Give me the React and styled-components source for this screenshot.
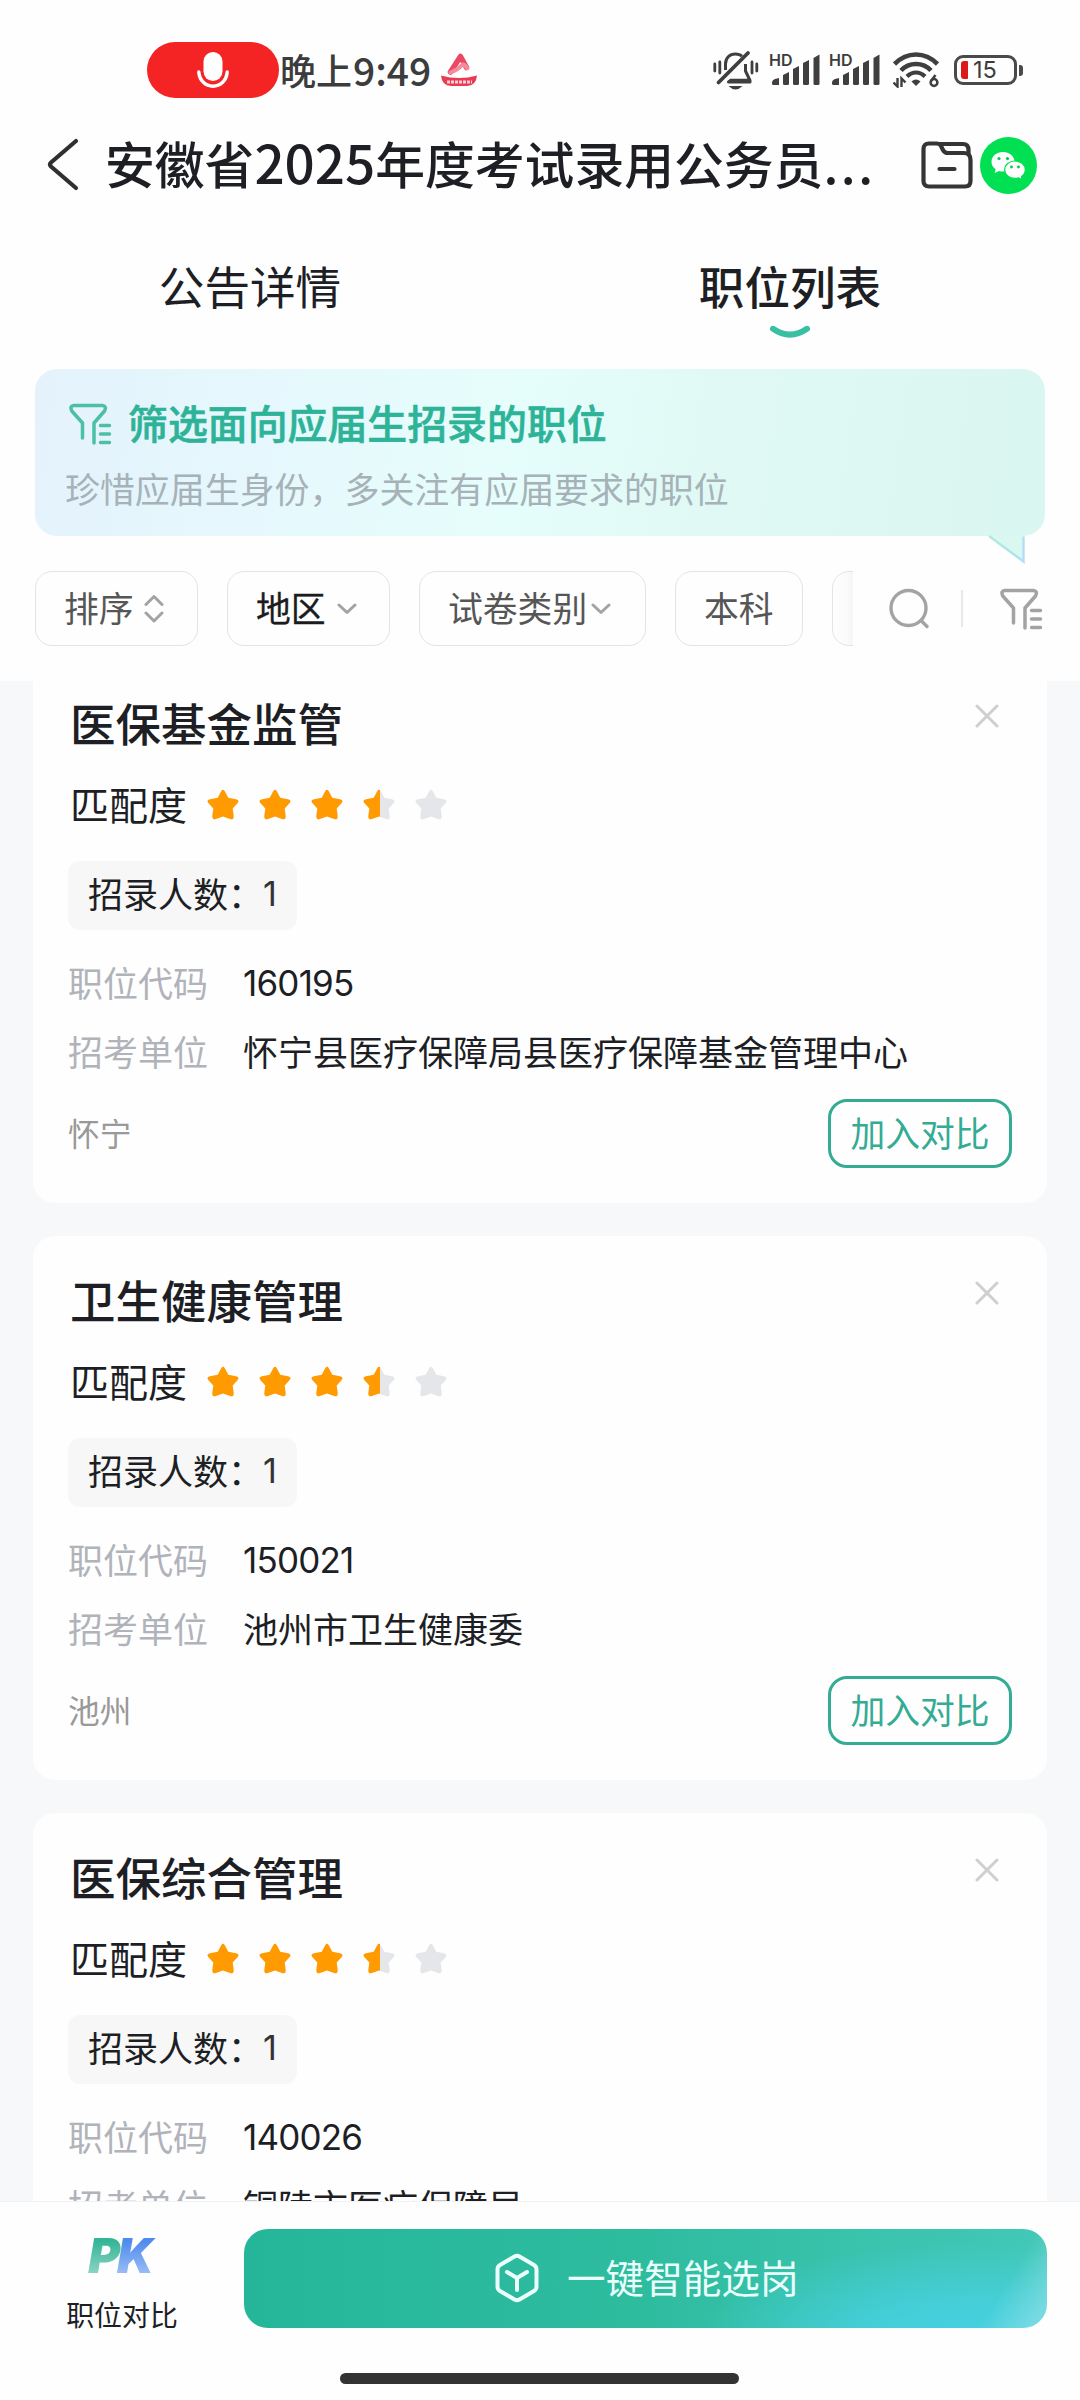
import React from "react";
import styled, { createGlobalStyle } from "styled-components";

const GlobalStyle = createGlobalStyle`
  * { box-sizing: border-box; }
  html, body { margin: 0; padding: 0; background: #fff; }
  body { font-family: Lato, "Noto Sans CJK SC", sans-serif; }
  svg { display: block; flex: none; }
`;

const Screen = styled.div`
  width: 1080px;
  height: 2400px;
  display: flex;
  flex-direction: column;
  overflow: hidden;
  background: #fefefe;
  color: #1d1f25;
  white-space: nowrap;
`;

const Header = styled.header`
  height: 681px;
  flex: none;
  display: flex;
  flex-direction: column;
`;

/* status bar */
const StatusBar = styled.div`
  height: 120px;
  padding: 20px 57px 0 147px;
  display: flex;
  align-items: center;
  color: #3c3c3c;
`;
const MicPill = styled.div`
  width: 132px;
  height: 56px;
  border-radius: 28px;
  background: #f52424;
  display: flex;
  align-items: center;
  justify-content: center;
`;
const Clock = styled.div`
  display: flex;
  margin: 0 6px 2px 1px;
  font-family: "Noto Sans CJK SC", sans-serif;
  font-size: 36px;
  font-weight: 500;
  line-height: 44px;
`;
const ClockDigits = styled.span`
  width: 83px;
  padding-left: 1px;
  font-size: 39px;
`;
const StatusIcons = styled.div`
  margin-left: auto;
  display: flex;
  align-items: center;
`;
const Signal = styled.div`
  position: relative;
  width: 50px;
  height: 32px;
  margin-left: ${(p) => p.$gap}px;
`;
const SignalTag = styled.span`
  position: absolute;
  left: -1px;
  top: 0;
  font-family: Inter, sans-serif;
  font-size: 16px;
  line-height: 12px;
  font-weight: 600;
`;
const WifiBox = styled.div`
  margin-left: 13px;
`;
const Battery = styled.div`
  width: 63px;
  height: 30px;
  margin-left: 15px;
  border: 3px solid #4a4a4a;
  border-radius: 9px;
  padding: 3px 3px 3px 4px;
  display: flex;
  align-items: center;
  font-family: Inter, sans-serif;
  font-size: 23.5px;
  line-height: 20px;
`;
const BatteryLevel = styled.div`
  width: 7px;
  height: 18px;
  margin-right: 5px;
  border-radius: 3px 1px 1px 3px;
  background: #dc1a1a;
`;
const BatteryTip = styled.div`
  width: 4px;
  height: 11px;
  margin-left: 2px;
  border-radius: 0 3px 3px 0;
  background: #4a4a4a;
`;

/* title bar */
const TitleBar = styled.div`
  height: 90px;
  padding: 0 43px 0 46px;
  display: flex;
  align-items: center;
`;
const PageTitle = styled.h1`
  margin: 0 0 3px 25px;
  flex: 1;
  font-size: 49.8px;
  font-weight: 500;
  line-height: 60px;
`;
const TitleDigits = styled.span`
  font-family: "Noto Sans CJK SC", sans-serif;
  font-size: 53px;
  line-height: 1px;
`;
const TitleDots = styled.span`
  font-family: "Noto Sans CJK SC", sans-serif;
  letter-spacing: 2.6px;
`;
const TitleActions = styled.div`
  display: flex;
  align-items: center;
  gap: 7px;
`;

/* tabs */
const Tabs = styled.nav`
  height: 159px;
  padding-top: 48px;
  display: grid;
  grid-template-columns: 500px 580px;
`;
const Tab = styled.div`
  display: flex;
  flex-direction: column;
  align-items: center;
  gap: 7px;
  font-size: 45.6px;
  line-height: 60px;
  font-weight: ${(p) => (p.$active ? 500 : 400)};
`;

/* banner */
const Banner = styled.section`
  position: relative;
  height: 167px;
  margin: 0 35px;
  padding: 29px 30px 0;
  border-radius: 22px;
  background: linear-gradient(98deg, #e4f2fc 0%, #e6f9fd 28%, #e6fefb 48%, #e0f9f5 66%, #daf6f0 100%);
`;
const BannerTitle = styled.div`
  display: flex;
  align-items: center;
  gap: 15px;
  padding-left: 4px;
  color: #2db398;
  font-size: 39.9px;
  font-weight: 500;
  -webkit-text-stroke: 0.6px #2db398;
  line-height: 52px;
`;
const BannerNote = styled.div`
  margin-top: 15px;
  color: #a6b2b8;
  font-size: 34.95px;
  line-height: 50px;
`;
const BannerTail = styled.div`
  position: absolute;
  left: 950px;
  top: 166px;
`;

/* filter row */
const FilterRow = styled.div`
  height: 75px;
  margin: 35px 0 0 35px;
  display: flex;
  align-items: center;
`;
const Chips = styled.div`
  width: 818px;
  height: 75px;
  display: flex;
  gap: 29px;
  overflow: hidden;
`;
const Chip = styled.div`
  flex: none;
  width: ${(p) => p.$width}px;
  height: 75px;
  padding-left: 28px;
  border: 1px solid #e4e4e4;
  border-radius: 17px;
  display: flex;
  align-items: center;
  gap: ${(p) => p.$gap || 0}px;
  color: ${(p) => (p.$strong ? "#1c1c1e" : "#565656")};
  font-size: 34.8px;
  -webkit-text-stroke: ${(p) => (p.$strong ? 0.3 : 0)}px #1c1c1e;
  line-height: 50px;
  background: ${(p) => (p.$faded ? "linear-gradient(90deg, #fefefe 0, #fbfbfb 12px, #f6f6f6 20px)" : "transparent")};
`;
const FilterTools = styled.div`
  display: flex;
  align-items: center;
  margin-left: 36px;
`;
const ToolDivider = styled.div`
  width: 2px;
  height: 37px;
  margin: 0 37px 0 31px;
  background: #e8e8e8;
`;

/* list */
const List = styled.main`
  flex: 1;
  min-height: 0;
  overflow: hidden;
  padding: 0 33px;
  background: #f6f8fa;
`;
const Cards = styled.div`
  margin-top: -22px;
  display: flex;
  flex-direction: column;
  gap: 33px;
`;
const Card = styled.article`
  height: 544px;
  flex: none;
  padding: 36px 35px 35px 35px;
  border-radius: 22px;
  background: #fefefe;
`;
const CardHead = styled.div`
  display: flex;
  justify-content: space-between;
  padding: 0 13px 0 2px;
`;
const JobTitle = styled.h2`
  margin: 0;
  font-size: 45.5px;
  font-weight: 500;
  line-height: 60px;
`;
const CloseSlot = styled.div`
  padding-top: 9px;
`;
const Rating = styled.div`
  height: 60px;
  margin-top: 20px;
  padding-left: 2px;
  display: flex;
  align-items: center;
  font-size: 39px;
  line-height: 60px;
`;
const Stars = styled.div`
  display: flex;
  gap: 20px;
  margin-left: 20px;
`;
const Quota = styled.div`
  width: 229px;
  height: 69px;
  margin: 26px 0 23px;
  padding: 0 0 4px 20px;
  border-radius: 12px;
  background: #f7f7f7;
  display: flex;
  align-items: center;
  font-size: 35px;
  line-height: 50px;
`;
const QuotaValue = styled.span`
  color: #333;
  font-family: Inter, sans-serif;
  font-size: 34px;
`;
const Field = styled.div`
  display: flex;
  gap: 35px;
  margin-bottom: ${(p) => p.$after}px;
  font-size: 35px;
  line-height: 60px;
`;
const FieldLabel = styled.span`
  color: #b1b3ba;
`;
const FieldCode = styled.span`
  font-family: Inter, sans-serif;
  font-size: 35px;
  letter-spacing: -0.8px;
`;
const CardFoot = styled.div`
  display: flex;
  align-items: center;
  justify-content: space-between;
`;
const Place = styled.span`
  padding-bottom: 3px;
  color: #999;
  font-size: 31.7px;
`;
const CompareButton = styled.button`
  width: 184px;
  height: 69px;
  padding: 0;
  border: 3px solid #34ab93;
  border-radius: 19px;
  background: transparent;
  color: #34ab93;
  font: inherit;
  font-size: 34.8px;
  line-height: 50px;
`;

/* bottom bar */
const BottomBar = styled.footer`
  height: 199px;
  flex: none;
  padding: 27px 33px 0 62px;
  border-top: 1px solid #f0f1f2;
  display: flex;
  flex-direction: column;
  align-items: stretch;
`;
const BottomRow = styled.div`
  display: flex;
  justify-content: space-between;
`;
const PkEntry = styled.div`
  width: 120px;
  height: 99px;
  display: flex;
  flex-direction: column;
  align-items: center;
`;
const PkMark = styled.div`
  padding: 0 7px 0 2px;
  margin-top: -3px;
  font-family: Inter, sans-serif;
  font-size: 48.5px;
  font-style: italic;
  font-weight: 900;
  line-height: 60px;
  letter-spacing: -3px;
  color: transparent;
  background:
    linear-gradient(rgba(255, 255, 255, 0) 25%, rgba(255, 255, 255, 0.42) 78%),
    linear-gradient(100deg, #35b597 48%, #4f8bee 48%);
  -webkit-background-clip: text;
  background-clip: text;
`;
const PkLabel = styled.div`
  margin-top: 9px;
  font-size: 27.9px;
  line-height: 40px;
`;
const SmartButton = styled.button`
  width: 803px;
  height: 99px;
  border: 0;
  border-radius: 24px;
  padding: 0 0 2px 251px;
  display: flex;
  align-items: center;
  gap: 28px;
  color: #eafffb;
  font: inherit;
  font-size: 38.6px;
  line-height: 54px;
  background:
    linear-gradient(122deg, transparent 92%, rgba(150, 225, 232, 0.6) 98%),
    radial-gradient(ellipse 260px 95px at 715px 108px, #46d1e2 0%, rgba(70, 209, 226, 0.75) 40%, rgba(70, 209, 226, 0) 100%),
    linear-gradient(90deg, #25b699 0%, #2ebc9f 50%, #43c8b8 100%);
`;
const HomeIndicator = styled.div`
  width: 399px;
  height: 11px;
  margin: 45px 0 0 278px;
  border-radius: 6px;
  background: #333;
`;

const MicIcon = () => (
  <svg width="32" height="36" viewBox="0 0 32 36" fill="none">
    <rect x="6.5" y="0" width="19" height="29" rx="9.5" fill="#fff" />
    <path d="M1.8 20C2.5 28.6 8.5 34.2 16 34.2S29.500 28.600 30.200 20" stroke="#fff" strokeWidth="3.4" strokeLinecap="round" />
  </svg>
);

const BoatIcon = () => (
  <svg width="36" height="36" viewBox="0 0 36 36">
    <path d="M9.500 20L19.500 4.500L25.500 15.500" fill="none" stroke="#ec4763" strokeWidth="5.500" strokeLinecap="round" strokeLinejoin="round" />
    <path d="M9.500 20.500Q17 17.500 20 14T26 16" fill="none" stroke="#f48c9c" strokeWidth="4" strokeLinecap="round" strokeLinejoin="round" />
    <path d="M0 23.500Q18 28.500 36 23.500Q35 34 26 34H10Q1 34 0 23.500Z" fill="#ea3b54" />
    <path d="M6 30H31" stroke="#fbd0d5" strokeWidth="2.800" strokeDasharray="3 1" />
  </svg>
);

const MutedBellIcon = () => (
  <svg width="46" height="40" viewBox="0 0 46 40" fill="none" stroke="#3f3f3f" strokeWidth="3.800">
    <path d="M12.500 20V14C12.500 8 16.500 4 22.500 4C25.500 4 27.500 4.800 29 6.300M32.500 14V21L37 30.500V32H15.500L17.500 30.300H37" strokeLinejoin="round" strokeWidth="3" />
    <path d="M5.500 32.500L35 3" strokeLinecap="round" />
    <path d="M1.800 14V21M6.800 12V23M39 12V23M43.800 14V21" strokeWidth="2.800" strokeLinecap="round" />
    <path d="M15.500 36H29.500Q26 39.500 22.500 39.500T15.500 36Z" fill="#3f3f3f" stroke="none" />
  </svg>
);

const SignalBars = () => (
  <svg width="50" height="32" viewBox="0 0 50 32" fill="#3f3f3f">
    <path d="M2 29Q2 26 5 25L9 24V31H3.500Q2 31 2 29.500Z" />
    <path d="M13 21L19 18V29.500Q19 31 17.500 31H14.500Q13 31 13 29.500Z" />
    <path d="M23 15L29 12V29.500Q29 31 27.500 31H24.500Q23 31 23 29.500Z" />
    <path d="M33 9L39 6V29.500Q39 31 37.500 31H34.500Q33 31 33 29.500Z" />
    <path d="M43.500 4L49.500 0.500V29.500Q49.500 31 48 31H45Q43.500 31 43.500 29.500Z" />
  </svg>
);

const WifiGlyph = () => (
  <svg width="46" height="36" viewBox="0 0 46 36" fill="none" stroke="#3f3f3f">
    <path d="M1.500 12Q11 2.500 23 2.500T44.500 12" strokeWidth="4.600" />
    <path d="M8 18.500Q14 12 23 12T38 18.500" strokeWidth="4.600" />
    <path d="M14 24.500Q18 20.500 23 20.500T32 24.500" strokeWidth="4.200" />
    <path d="M18.500 29.500Q23 25.500 27.500 29.500L23 34Z" fill="#3f3f3f" stroke="none" />
    <path d="M4.500 26V34.500L.5 30.500M8.500 35V26.500L12.500 30.500" strokeWidth="2.400" />
    <circle cx="41" cy="30.500" r="3.400" strokeWidth="2.500" />
    <path d="M38 29L42.500 23" strokeWidth="2.500" />
  </svg>
);

const BackIcon = () => (
  <svg width="34" height="56" viewBox="0 0 34 56" fill="none">
    <path d="M30 4L5 25.500Q3 27.500 5 29.500L30 51" stroke="#303030" strokeWidth="4.200" strokeLinecap="round" />
  </svg>
);

const FolderIcon = () => (
  <svg width="52" height="48" viewBox="0 0 52 48" fill="none" stroke="#353535" strokeWidth="4.200">
    <path d="M2.500 8Q2.500 2.500 8 2.500H15.500Q18.500 2.500 20 5L22 9Q23.500 12 27 12H43Q49.500 12 49.500 19V40Q49.500 45.500 44 45.500H8Q2.500 45.500 2.500 40Z" />
    <path d="M17.500 3H42Q47.500 3 47.500 9V14" />
    <path d="M18.500 28H33.500" strokeLinecap="round" />
  </svg>
);

const WechatIcon = () => (
  <svg width="57" height="57" viewBox="0 0 57 57">
    <circle cx="28.500" cy="28.500" r="28.500" fill="#00e052" />
    <path d="M23 15C16.500 15 11.500 19.300 11.500 24.800C11.500 27.900 13 30.500 15.600 32.300L14.600 36L19 34C20.300 34.400 21.600 34.600 23 34.600C29.500 34.600 34.500 30.300 34.500 24.800S29.500 15 23 15Z" fill="#fff" />
    <path d="M35 24C29.200 24 24.700 27.900 24.700 32.700S29.200 41.400 35 41.400C36.200 41.400 37.400 41.200 38.500 40.900L42.200 42.600L41.500 39.500C43.900 37.900 45.300 35.500 45.300 32.700C45.300 27.900 40.800 24 35 24Z" fill="#fff" stroke="#00e052" strokeWidth="1.200" />
    <circle cx="19" cy="21.500" r="1.600" fill="#00c94a" />
    <circle cx="27.500" cy="21.500" r="1.600" fill="#00c94a" />
    <circle cx="31.500" cy="30" r="1.400" fill="#00c94a" />
    <circle cx="38.500" cy="30" r="1.400" fill="#00c94a" />
  </svg>
);

const SmileMark = () => (
  <svg width="42" height="14" viewBox="0 0 42 14" fill="none">
    <path d="M4 3.800Q21 15.500 38 3.800" stroke="#3abfa5" strokeWidth="6" strokeLinecap="round" />
  </svg>
);

const FunnelIcon = ({ color }) => (
  <svg width="44" height="42" viewBox="0 0 44 42" fill="none" stroke={color} strokeWidth="3.500" strokeLinecap="round" strokeLinejoin="round">
    <path d="M13.500 35V20L2.800 8Q.5 3 4.500 2.500H33.500Q38 3 35.500 8L25 20V40" />
    <path d="M31.500 22.500H40.500M31.500 31H40.500M31.500 39.500H40.500" />
  </svg>
);

const TailIcon = () => (
  <svg width="44" height="30" viewBox="0 0 44 30">
    <defs>
      <linearGradient id="tailEdge" x1="0" y1="0" x2="1" y2="0">
        <stop offset="0" stopColor="#b0ecdb" />
        <stop offset="0.6" stopColor="#a9e6ea" />
        <stop offset="1" stopColor="#b4def8" />
      </linearGradient>
    </defs>
    <path d="M3 0L39 27V0Z" fill="#daf7f0" />
    <path d="M4 1L38.500 26.500V1.500" fill="none" stroke="url(#tailEdge)" strokeWidth="2.400" />
  </svg>
);

const SortIcon = () => (
  <svg width="20" height="30" viewBox="0 0 20 30" fill="none" stroke="#a3a3a3" strokeWidth="3" strokeLinecap="round" strokeLinejoin="round">
    <path d="M2 10.500L10 2.500L18 10.500M2 19L10 27L18 19" />
  </svg>
);

const DownIcon = () => (
  <svg width="20" height="12" viewBox="0 0 20 12" fill="none" stroke="#a3a3a3" strokeWidth="3" strokeLinecap="round" strokeLinejoin="round">
    <path d="M2 2L10 9.500L18 2" />
  </svg>
);

const SearchIcon = () => (
  <svg width="41" height="41" viewBox="0 0 41 41" fill="none" stroke="#a3a3a3" strokeWidth="3.400" strokeLinecap="round">
    <circle cx="19.500" cy="20" r="17.500" />
    <path d="M32 32.500L38 38.500" />
  </svg>
);

const CloseIcon = () => (
  <svg width="24" height="24" viewBox="0 0 24 24" stroke="#cfcfcf" strokeWidth="3" strokeLinecap="round">
    <path d="M2 2L22 22M22 2L2 22" />
  </svg>
);

const STAR =
  "M14.200 2.200Q16 -.6 17.800 2.200L21.300 8.800L29 10.200Q33 11.200 30.700 14L25.700 19.500L26.700 27Q26.900 31.200 23 30.100L16 27.500L9 30.100Q5.100 31.200 5.300 27L6.300 19.500L1.300 14Q-1 11.200 3 10.200L10.700 8.800Z";

const StarIcon = ({ fill }) => (
  <svg width="32" height="32" viewBox="0 0 32 32">
    <defs>
      <linearGradient id="halfStar">
        <stop offset="0.52" stopColor="#ff9a00" />
        <stop offset="0.52" stopColor="#e5e6ea" />
      </linearGradient>
    </defs>
    <path d={STAR} fill={fill === 1 ? "#ff9a00" : fill === 0 ? "#e5e6ea" : "url(#halfStar)"} />
  </svg>
);

const HexIcon = () => (
  <svg width="44" height="50" viewBox="0 0 44 50" fill="none" stroke="#eafffb" strokeWidth="4" strokeLinecap="round" strokeLinejoin="round">
    <path d="M19.500 3.500Q22 2 24.500 3.500L39 12Q41.500 13.500 41.500 16.500V33.500Q41.500 36.500 39 38L24.500 46.500Q22 48 19.500 46.500L5 38Q2.500 36.500 2.500 33.500V16.500Q2.500 13.500 5 12Z" />
    <path d="M12 19L22 25L32 19M22 25V37" />
  </svg>
);

const JOBS = [
  { title: "医保基金监管", code: "160195", unit: "怀宁县医疗保障局县医疗保障基金管理中心", place: "怀宁" },
  { title: "卫生健康管理", code: "150021", unit: "池州市卫生健康委", place: "池州" },
  { title: "医保综合管理", code: "140026", unit: "铜陵市医疗保障局" },
];

const JobCard = ({ job }) => (
  <Card>
    <CardHead>
      <JobTitle>{job.title}</JobTitle>
      <CloseSlot><CloseIcon /></CloseSlot>
    </CardHead>
    <Rating>
      匹配度
      <Stars>
        {[1, 1, 1, 0.5, 0].map((fill, i) => <StarIcon key={i} fill={fill} />)}
      </Stars>
    </Rating>
    <Quota>招录人数：<QuotaValue>1</QuotaValue></Quota>
    <Field $after={9}>
      <FieldLabel>职位代码</FieldLabel>
      <FieldCode>{job.code}</FieldCode>
    </Field>
    <Field $after={17}>
      <FieldLabel>招考单位</FieldLabel>
      <span>{job.unit}</span>
    </Field>
    {job.place && (
      <CardFoot>
        <Place>{job.place}</Place>
        <CompareButton>加入对比</CompareButton>
      </CardFoot>
    )}
  </Card>
);

export default function App() {
  return (
    <Screen>
      <GlobalStyle />
      <Header>
        <StatusBar>
          <MicPill><MicIcon /></MicPill>
          <Clock>晚上<ClockDigits>9:49</ClockDigits></Clock>
          <BoatIcon />
          <StatusIcons>
            <MutedBellIcon />
            <Signal $gap={11}><SignalBars /><SignalTag>HD</SignalTag></Signal>
            <Signal $gap={10}><SignalBars /><SignalTag>HD</SignalTag></Signal>
            <WifiBox><WifiGlyph /></WifiBox>
            <Battery><BatteryLevel />15</Battery>
            <BatteryTip />
          </StatusIcons>
        </StatusBar>
        <TitleBar>
          <BackIcon />
          <PageTitle>
            安徽省<TitleDigits>2025</TitleDigits>年度考试录用公务员<TitleDots>...</TitleDots>
          </PageTitle>
          <TitleActions><FolderIcon /><WechatIcon /></TitleActions>
        </TitleBar>
        <Tabs>
          <Tab>公告详情</Tab>
          <Tab $active>职位列表<SmileMark /></Tab>
        </Tabs>
        <Banner>
          <BannerTitle><FunnelIcon color="#4cbfa6" />筛选面向应届生招录的职位</BannerTitle>
          <BannerNote>珍惜应届生身份，多关注有应届要求的职位</BannerNote>
          <BannerTail><TailIcon /></BannerTail>
        </Banner>
        <FilterRow>
          <Chips>
            <Chip $width={163} $gap={10}>排序<SortIcon /></Chip>
            <Chip $width={163} $gap={11} $strong>地区<DownIcon /></Chip>
            <Chip $width={227} $gap={4}>试卷类别<DownIcon /></Chip>
            <Chip $width={128}>本科</Chip>
            <Chip $width={128} $faded />
          </Chips>
          <FilterTools>
            <SearchIcon />
            <ToolDivider />
            <FunnelIcon color="#a3a3a3" />
          </FilterTools>
        </FilterRow>
      </Header>
      <List>
        <Cards>
          {JOBS.map((job) => <JobCard key={job.code} job={job} />)}
        </Cards>
      </List>
      <BottomBar>
        <BottomRow>
          <PkEntry>
            <PkMark>PK</PkMark>
            <PkLabel>职位对比</PkLabel>
          </PkEntry>
          <SmartButton><HexIcon />一键智能选岗</SmartButton>
        </BottomRow>
        <HomeIndicator />
      </BottomBar>
    </Screen>
  );
}
